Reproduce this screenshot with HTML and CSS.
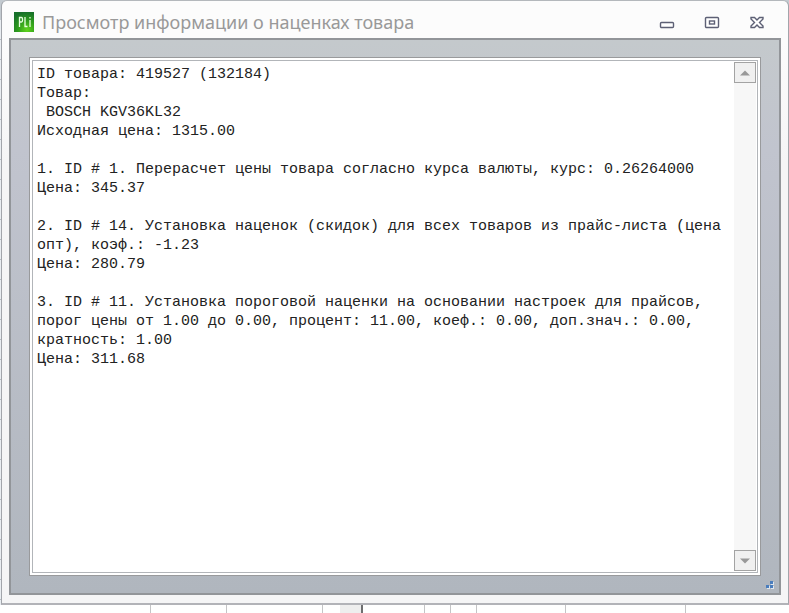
FILE: index.html
```html
<!DOCTYPE html>
<html lang="ru">

<head>
    <meta charset="UTF-8">
    <meta name="viewport" content="width=device-width, initial-scale=1.0">
    <title>Просмотр информации о наценках товара</title>
    <link rel="stylesheet" href="styles.css">
</head>

<body>
    <main class="window">
        <header class="titlebar">
            <svg class="logo" viewBox="0 0 20 20" aria-hidden="true">
                <defs>
                    <radialGradient id="green" cx="0.65" cy="0.9" r="0.9">
                        <stop offset="0" stop-color="#5fd41c" />
                        <stop offset="0.5" stop-color="#2f9e1c" />
                        <stop offset="1" stop-color="#17702a" />
                    </radialGradient>
                </defs>
                <rect width="20" height="20" fill="url(#green)" />
                <path d="M5.5 15V5.5H7.5Q8.5 5.5 8.5 7V8.5Q8.5 10 7.5 10H5.5M11 5V14.5H13.5M16 8V15M16 5V6.5" fill="none" stroke="#e8ffe0" stroke-width="1.3" />
            </svg>
            <h1 class="title" id="title">Просмотр информации о наценках товара</h1>
            <div class="controls">
                <button class="control" type="button" aria-label="Свернуть">
                    <svg viewBox="0 0 16 16"><rect x="1.5" y="8.5" width="13" height="5" rx="1" /></svg>
                </button>
                <button class="control" type="button" aria-label="Развернуть">
                    <svg viewBox="0 0 16 16"><rect x="1.5" y="3.5" width="13" height="10" rx="1" /><rect x="5.5" y="7" width="5" height="3" /></svg>
                </button>
                <button class="control" type="button" aria-label="Закрыть">
                    <svg viewBox="0 0 16 16"><path d="M2 3.5H5.5L8 6L10.5 3.5H14V5L10.5 8.5L14 12V13.5H10.5L8 11L5.5 13.5H2V12L5.5 8.5L2 5Z" /></svg>
                </button>
            </div>
        </header>
        <div class="panel">
            <div class="memo">
                <textarea class="memo-text" aria-labelledby="title" spellcheck="false" readonly>ID товара: 419527 (132184)
Товар:
 BOSCH KGV36KL32
Исходная цена: 1315.00

1. ID # 1. Перерасчет цены товара согласно курса валюты, курс: 0.26264000
Цена: 345.37

2. ID # 14. Установка наценок (скидок) для всех товаров из прайс-листа (цена опт), коэф.: -1.23
Цена: 280.79

3. ID # 11. Установка пороговой наценки на основании настроек для прайсов, порог цены от 1.00 до 0.00, процент: 11.00, коеф.: 0.00, доп.знач.: 0.00, кратность: 1.00
Цена: 311.68</textarea>
                <div class="scrollbar">
                    <button class="arrow" type="button" aria-label="Вверх">
                        <svg viewBox="0 0 10 6"><path d="M0 5.5L5 0.5L10 5.5Z" /></svg>
                    </button>
                    <button class="arrow" type="button" aria-label="Вниз">
                        <svg viewBox="0 0 10 6"><path d="M0 0.5H10L5 5.5Z" /></svg>
                    </button>
                </div>
            </div>
            <svg class="grip" viewBox="0 0 9 9" aria-hidden="true">
                <path d="M6 2H9V5H6ZM2 6H5V9H2ZM6 6H9V9H6Z" fill="#dfe6ee" />
                <path d="M5 1H8V4H5ZM1 5H4V8H1ZM5 5H8V8H5Z" fill="#4a7dbd" />
            </svg>
        </div>
    </main>
    <!-- grid of the window behind -->
    <div class="behind">
        <i></i><i></i><i></i><i class="current"></i><i></i><i></i><i></i><i></i><i></i>
    </div>
</body>

</html>
```

FILE: styles.css
```css
* {
    box-sizing: border-box;
}

body {
    height: 100vh;
    margin: 0;
    display: flex;
    flex-direction: column;
    background-color: #fff;
    background-image: linear-gradient(#c3cad0 20px, transparent 20px), repeating-linear-gradient(#e9edf1 0 19px, #b9bdc4 19px 20px);
    font-family: "Noto Sans", sans-serif;
}

.window {
    flex: 1;
    min-height: 0;
    display: flex;
    flex-direction: column;
    margin-left: 1px;
    padding: 0 7px 8px;
    border: 1px solid #a2a5ab;
    border-top-color: #b4b8bc;
    border-bottom: 2px solid #b2b3b8;
    border-radius: 6px 6px 0 0;
    background-image: linear-gradient(#fcfcfc 40px, #f5f5f6 160px);
}

.titlebar {
    display: flex;
    align-items: center;
    height: 37px;
    padding: 4px 16px 0 5px;
}

.logo {
    width: 20px;
    height: 20px;
}

.title {
    flex: 1;
    margin: 0 0 0 8px;
    font-size: 18px;
    font-weight: normal;
    line-height: 24px;
    white-space: nowrap;
    color: #999;
}

.controls {
    display: flex;
    gap: 29px;
}

.control {
    width: 16px;
    height: 16px;
    padding: 0;
    border: 0;
    background: none;
}

.control svg {
    display: block;
    fill: #fff;
    stroke: #5d6075;
    stroke-width: 1.4;
}

.panel {
    flex: 1;
    min-height: 0;
    display: flex;
    position: relative;
    padding: 17px 18px;
    border: 2px solid #929599;
    background-image: linear-gradient(#c4c9cc, #c1c4ce 20%, #b0b6be);
}

.memo {
    flex: 1;
    display: flex;
    border: 1px solid #999a9c;
    outline: 1px solid #b2b5b9;
    outline-offset: -4px;
    padding: 4px 4px 4px 3px;
    background-color: #fff;
}

.memo-text {
    flex: 1;
    min-width: 0;
    margin: 0;
    padding: 3px 0 0 4px;
    border: 0;
    outline: 0;
    resize: none;
    overflow: hidden;
    font-family: "Liberation Mono", monospace;
    font-size: 15px;
    line-height: 19px;
    color: #222;
    background-color: transparent;
}

.scrollbar {
    width: 22px;
    display: flex;
    flex-direction: column;
    justify-content: space-between;
    background-color: #f7f7f7;
}

.arrow {
    display: flex;
    align-items: center;
    justify-content: center;
    height: 21px;
    padding: 0;
    border: 1px solid #a3a3a3;
    background-color: #f0f0f0;
}

.arrow svg {
    width: 10px;
    height: 6px;
    fill: #989898;
}

.grip {
    position: absolute;
    right: 5px;
    bottom: 4px;
    width: 9px;
    height: 9px;
}

.behind {
    display: grid;
    grid-template-columns: 151fr 76fr 96fr 40fr 62fr 26fr 26fr 89fr 120fr 103fr;
    height: 8px;
    background-color: #fff;
}

.behind i {
    border-right: 1px solid #c4c4c6;
}

.behind .current {
    border-right: 2px solid #6e6e70;
    background-image: linear-gradient(90deg, #fff 17px, #eee 17px);
}
```
